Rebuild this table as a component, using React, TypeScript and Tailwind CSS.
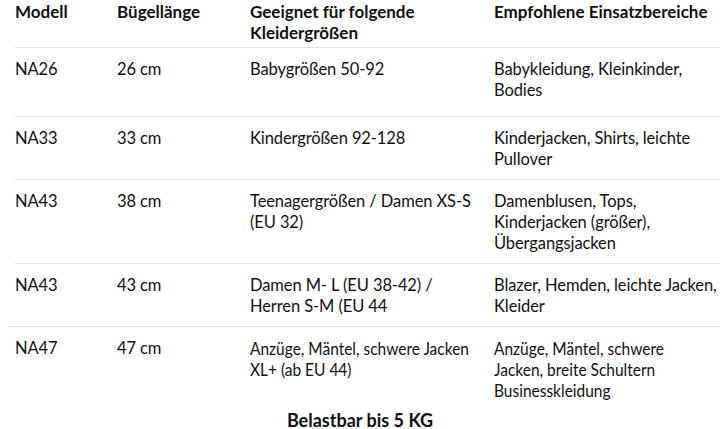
import clsx from 'clsx';

interface Row {
    model: string;
    length: string;
    sizes: string[];
    uses: string[];
}

const rows: Row[] = [
    { model: 'NA26', length: '26 cm', sizes: ['Babygrößen 50-92'], uses: ['Babykleidung, Kleinkinder,', 'Bodies'] },
    { model: 'NA33', length: '33 cm', sizes: ['Kindergrößen 92-128'], uses: ['Kinderjacken, Shirts, leichte', 'Pullover'] },
    {
        model: 'NA43',
        length: '38 cm',
        sizes: ['Teenagergrößen / Damen XS-S', '(EU 32)'],
        uses: ['Damenblusen, Tops,', 'Kinderjacken (größer),', 'Übergangsjacken'],
    },
    {
        model: 'NA43',
        length: '43 cm',
        sizes: ['Damen M- L (EU 38-42) /', 'Herren S-M (EU 44'],
        uses: ['Blazer, Hemden, leichte Jacken,', 'Kleider'],
    },
    {
        model: 'NA47',
        length: '47 cm',
        sizes: ['Anzüge, Mäntel, schwere Jacken', 'XL+ (ab EU 44)'],
        uses: ['Anzüge, Mäntel, schwere', 'Jacken, breite Schultern', 'Businesskleidung'],
    },
];

const cols = 'grid grid-cols-[102px_133px_244px_1fr]';

// last row of the source image is squeezed sideways, so mimic that
function Lines({ items, narrow }: { items: string[]; narrow?: boolean }) {
    return (
        <div className={clsx('whitespace-nowrap', narrow && 'text-[18px] tracking-normal origin-left scale-x-[0.86]')}>
            {items.map((t, i) => (
                <div key={i}>{t}</div>
            ))}
        </div>
    );
}

export default function App() {
    return (
        <div
            className="w-[720px] h-[429px] overflow-hidden bg-white text-[#0f1111] text-[16.5px] leading-[21px] tracking-[-0.1px]"
            style={{ fontFamily: 'Lato, "Noto Sans", sans-serif' }}
        >
            {/* Header */}
            <div className={clsx(cols, 'pl-[15px] pt-[1px] pb-[4px] font-bold text-[17px] tracking-normal')}>
                <div>Modell</div>
                <div>Bügellänge</div>
                <div>
                    <div>Geeignet für folgende</div>
                    <div>Kleidergrößen</div>
                </div>
                <div>Empfohlene Einsatzbereiche</div>
            </div>

            {/* Rows */}
            {rows.map((r, i) => {
                const last = i === rows.length - 1;
                return (
                    <div key={i} className={clsx('border-t border-[#e7e7e7]', last ? 'ml-2' : 'ml-[14px]')}>
                        <div
                            className={clsx(
                                cols,
                                last ? 'pl-[7px]' : 'pl-[1px]',
                                'pt-[11px]',
                                i === 0 ? 'pb-[15px]' : i === rows.length - 1 ? 'pb-[8px]' : 'pb-[9px]'
                            )}
                        >
                            <div>{r.model}</div>
                            <div>{r.length}</div>
                            <Lines items={r.sizes} narrow={last} />
                            <Lines items={r.uses} narrow={last} />
                        </div>
                    </div>
                );
            })}

            <div className="text-center font-bold text-[18px] leading-[16px] tracking-normal mt-[3px]">
                Belastbar bis 5 KG
            </div>
        </div>
    );
}
